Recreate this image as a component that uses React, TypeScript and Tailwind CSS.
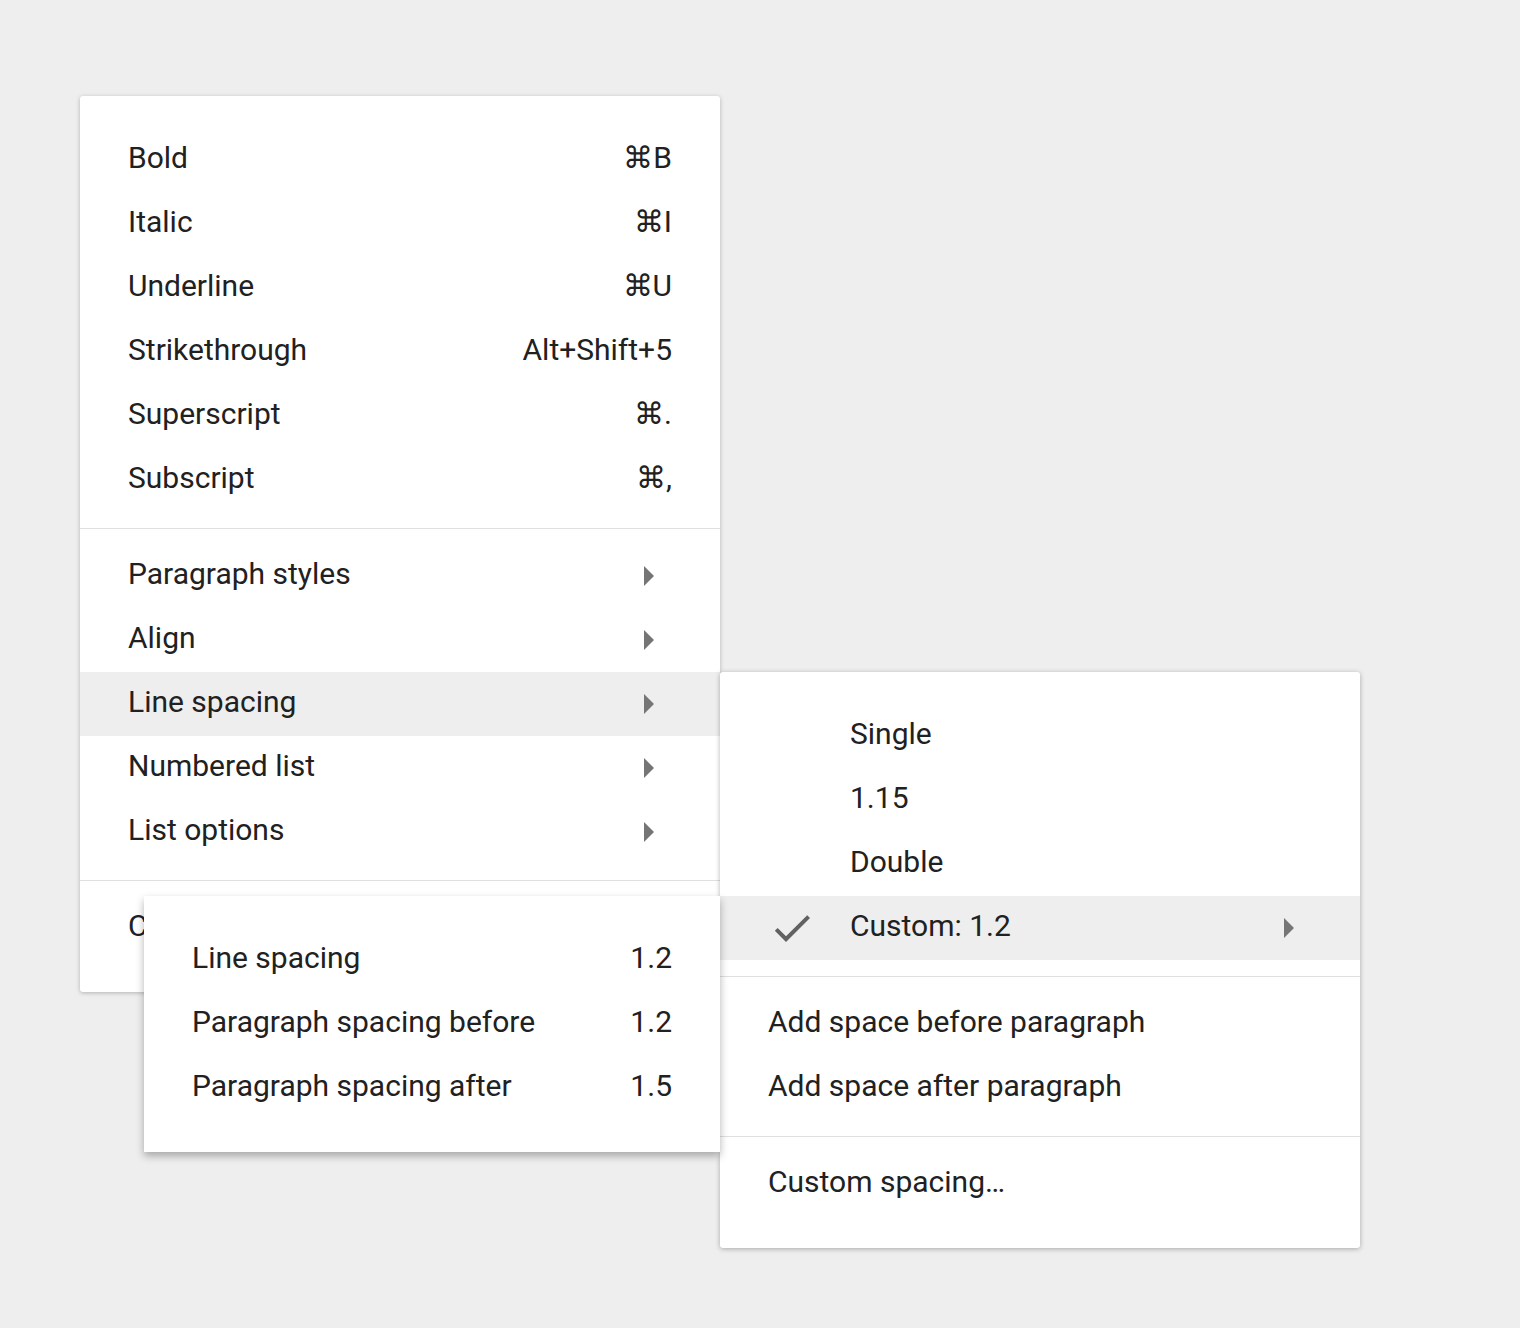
import React from 'react';

type Item = { label: string; shortcut?: string; sub?: boolean; active?: boolean; checked?: boolean };

const ArrowRight = () => (
  <svg width="48" height="48" viewBox="0 0 24 24" className="shrink-0">
    <path d="M10 17l5-5-5-5v10z" fill="#757575" />
  </svg>
);

const Check = () => (
  <svg width="48" height="48" viewBox="0 0 24 24" className="shrink-0">
    <path d="M9 16.17L4.83 12l-1.42 1.41L9 19 21 7l-1.41-1.41z" fill="#616161" />
  </svg>
);

const Row = ({ item, indent }: { item: Item; indent?: boolean }) => (
  <div
    className={`flex h-16 items-center justify-between pb-1 pl-12 pr-12 ${
      item.active ? 'bg-[#eeeeee]' : ''
    }`}
  >
    <div className="flex items-center">
      {indent && <div className="mr-[34px] mt-1 w-12">{item.checked && <Check />}</div>}
      <span>{item.label}</span>
    </div>
    {item.shortcut && <span>{item.shortcut}</span>}
    {item.sub && (
      <div className="mt-1">
        <ArrowRight />
      </div>
    )}
  </div>
);

const Divider = () => <div className="mb-[15px] mt-4 border-t border-[#e0e0e0]" />;

const formatItems: Item[] = [
  { label: 'Bold', shortcut: '⌘B' },
  { label: 'Italic', shortcut: '⌘I' },
  { label: 'Underline', shortcut: '⌘U' },
  { label: 'Strikethrough', shortcut: 'Alt+Shift+5' },
  { label: 'Superscript', shortcut: '⌘.' },
  { label: 'Subscript', shortcut: '⌘,' },
];

const paraItems: Item[] = [
  { label: 'Paragraph styles', sub: true },
  { label: 'Align', sub: true },
  { label: 'Line spacing', sub: true, active: true },
  { label: 'Numbered list', sub: true },
  { label: 'List options', sub: true },
];

const spacingItems: Item[] = [
  { label: 'Single' },
  { label: '1.15' },
  { label: 'Double' },
  { label: 'Custom: 1.2', checked: true, active: true, sub: true },
];

const customItems: Item[] = [
  { label: 'Line spacing', shortcut: '1.2' },
  { label: 'Paragraph spacing before', shortcut: '1.2' },
  { label: 'Paragraph spacing after', shortcut: '1.5' },
];

export default function App() {
  return (
    <div className="min-h-screen bg-[#eeeeee] font-['Roboto',sans-serif] text-[30px] leading-none text-[#212121]">
      <div className="relative pl-[80px] pt-[96px]">
        {/* Main format menu */}
        <div className="w-[640px] rounded-[3px] bg-white py-8 shadow-[0_1px_4px_rgba(0,0,0,0.25)]">
          {formatItems.map((i) => (
            <Row key={i.label} item={i} />
          ))}
          <Divider />
          {paraItems.map((i) => (
            <Row key={i.label} item={i} />
          ))}
          <Divider />
          <Row item={{ label: 'Clear formatting' }} />
        </div>

        {/* Line spacing submenu */}
        <div className="absolute left-[720px] top-[672px] w-[640px] rounded-[3px] bg-white py-8 shadow-[0_1px_5px_rgba(0,0,0,0.3)]">
          {spacingItems.map((i) => (
            <Row key={i.label} item={i} indent />
          ))}
          <Divider />
          <Row item={{ label: 'Add space before paragraph' }} />
          <Row item={{ label: 'Add space after paragraph' }} />
          <Divider />
          <Row item={{ label: 'Custom spacing…' }} />
        </div>

        {/* Custom spacing details */}
        <div className="absolute left-[144px] top-[896px] w-[576px] bg-white py-8 shadow-[0_4px_8px_rgba(0,0,0,0.3)]">
          {customItems.map((i) => (
            <Row key={i.label} item={i} />
          ))}
        </div>
      </div>
    </div>
  );
}
